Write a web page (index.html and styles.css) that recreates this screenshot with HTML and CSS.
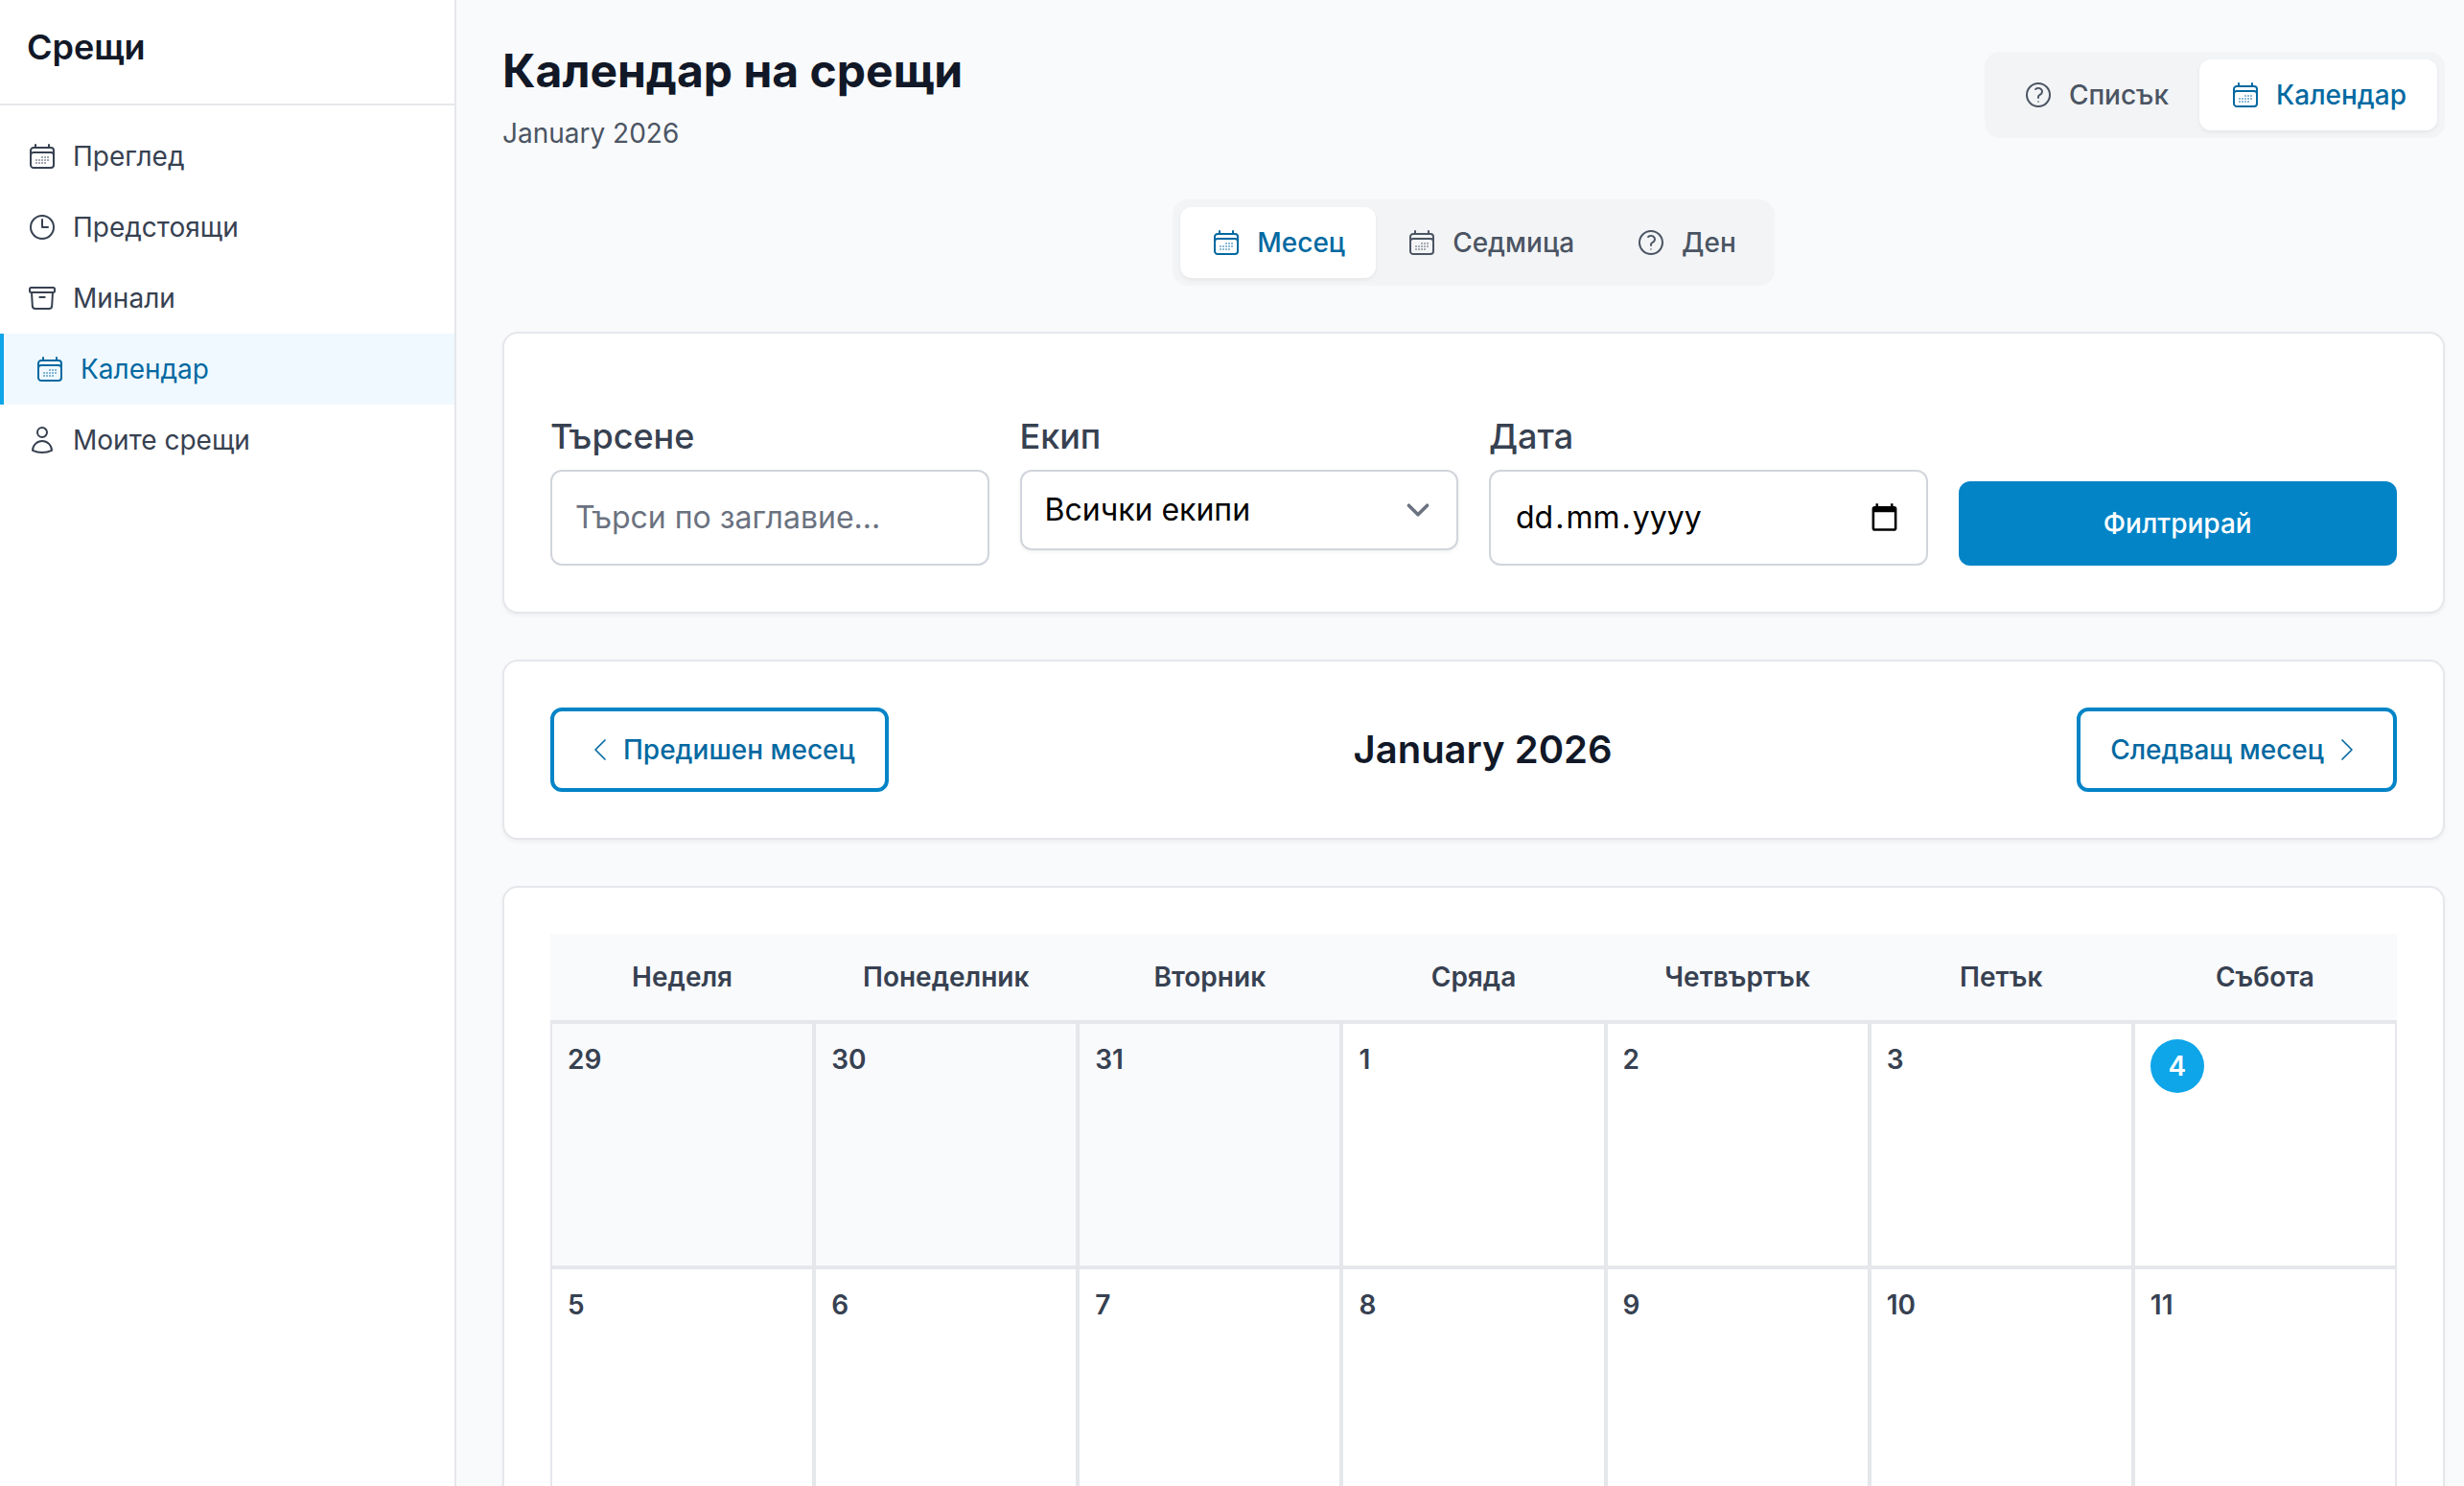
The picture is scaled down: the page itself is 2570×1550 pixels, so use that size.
FILE: index.html
```html
<!DOCTYPE html>
<html lang="bg">
<head>
<meta charset="utf-8">
<title>Календар на срещи</title>
<link rel="stylesheet" href="styles.css">
</head>
<body>
<svg class="sprite" aria-hidden="true">
  <symbol id="calendar" viewBox="0 0 24 24"><path d="M6.75 3v2.25M17.25 3v2.25M3 18.75V7.5a2.25 2.25 0 012.25-2.25h13.5A2.25 2.25 0 0121 7.5v11.25m-18 0A2.25 2.25 0 005.25 21h13.5A2.25 2.25 0 0021 18.75m-18 0v-7.5A2.25 2.25 0 015.25 9h13.5A2.25 2.25 0 0121 11.25v7.5"/><path opacity=".6" d="M12 12.75h.008v.008H12v-.008zM12 15h.008v.008H12V15zm0 2.25h.008v.008H12v-.008zM9.75 15h.008v.008H9.75V15zm0 2.25h.008v.008H9.75v-.008zM7.5 15h.008v.008H7.5V15zm0 2.25h.008v.008H7.5v-.008zm6.75-4.5h.008v.008h-.008v-.008zm0 2.25h.008v.008h-.008V15zm0 2.25h.008v.008h-.008v-.008zm2.25-4.5h.008v.008H16.5v-.008zm0 2.25h.008v.008H16.5V15z"/></symbol>
  <symbol id="clock" viewBox="0 0 24 24"><path d="M12 6v6h4.5m4.5 0a9 9 0 11-18 0 9 9 0 0118 0z"/></symbol>
  <symbol id="archive" viewBox="0 0 24 24"><path d="M20.25 7.5l-.625 10.632a2.25 2.25 0 01-2.247 2.118H6.622a2.25 2.25 0 01-2.247-2.118L3.75 7.5M10 11.25h4M3.375 7.5h17.25c.621 0 1.125-.504 1.125-1.125v-1.5c0-.621-.504-1.125-1.125-1.125H3.375c-.621 0-1.125.504-1.125 1.125v1.5c0 .621.504 1.125 1.125 1.125z"/></symbol>
  <symbol id="user" viewBox="0 0 24 24"><path d="M15.75 6a3.75 3.75 0 11-7.5 0 3.75 3.75 0 017.5 0zM4.501 20.118a7.5 7.5 0 0114.998 0A17.933 17.933 0 0112 21.75c-2.676 0-5.216-.584-7.499-1.632z"/></symbol>
  <symbol id="question" viewBox="0 0 24 24"><path d="M9.879 7.519c1.171-1.025 3.071-1.025 4.242 0 1.172 1.025 1.172 2.687 0 3.712-.203.179-.43.326-.67.442-.745.361-1.45.999-1.45 1.827v.75M21 12a9 9 0 11-18 0 9 9 0 0118 0z"/><path opacity=".6" d="M12 17.25h.008v.008H12v-.008z"/></symbol>
  <symbol id="left" viewBox="0 0 24 24"><path d="M15.75 19.5L8.25 12l7.5-7.5"/></symbol>
  <symbol id="right" viewBox="0 0 24 24"><path d="M8.25 4.5l7.5 7.5-7.5 7.5"/></symbol>
</svg>
<div class="app">
  <aside class="sidebar">
    <div class="sidebar-header"><h2 class="sidebar-title">Срещи</h2></div>
    <nav class="nav">
      <a class="nav-item"><svg class="icon"><use href="#calendar"/></svg><span>Преглед</span></a>
      <a class="nav-item"><svg class="icon"><use href="#clock"/></svg><span>Предстоящи</span></a>
      <a class="nav-item"><svg class="icon"><use href="#archive"/></svg><span>Минали</span></a>
      <a class="nav-item active"><svg class="icon"><use href="#calendar"/></svg><span>Календар</span></a>
      <a class="nav-item"><svg class="icon"><use href="#user"/></svg><span>Моите срещи</span></a>
    </nav>
  </aside>
  <main class="main">
    <header class="page-header">
      <div>
        <h1 class="page-title">Календар на срещи</h1>
        <p class="page-subtitle">January 2026</p>
      </div>
      <div class="tabs">
        <a class="tab"><svg class="icon"><use href="#question"/></svg><span>Списък</span></a>
        <a class="tab active"><svg class="icon"><use href="#calendar"/></svg><span>Календар</span></a>
      </div>
    </header>
    <div class="tabs view-tabs">
      <a class="tab active"><svg class="icon"><use href="#calendar"/></svg><span>Месец</span></a>
      <a class="tab"><svg class="icon"><use href="#calendar"/></svg><span>Седмица</span></a>
      <a class="tab"><svg class="icon"><use href="#question"/></svg><span>Ден</span></a>
    </div>
    <section class="card">
      <form class="filters">
        <div class="field">
          <label class="label">Търсене</label>
          <div class="control placeholder"><span>Търси по заглавие...</span></div>
        </div>
        <div class="field">
          <label class="label">Екип</label>
          <div class="control select"><span>Всички екипи</span><svg class="select-arrow" viewBox="0 0 20 20"><path d="M6 8l4 4 4-4"/></svg></div>
        </div>
        <div class="field">
          <label class="label">Дата</label>
          <div class="control date"><span><span class="part">dd</span>.<span class="part">mm</span>.<span class="part">yyyy</span></span><svg class="date-icon" viewBox="0 0 24 24"><path d="M20 3h-1V1h-2v2H7V1H5v2H4c-1.1 0-2 .9-2 2v16c0 1.1.9 2 2 2h16c1.1 0 2-.9 2-2V5c0-1.1-.9-2-2-2zm0 18H4V8h16v13z"/></svg></div>
        </div>
        <button class="submit" type="button">Филтрирай</button>
      </form>
    </section>
    <section class="card month-nav">
      <a class="outline-button prev"><svg class="icon"><use href="#left"/></svg><span>Предишен месец</span></a>
      <h2 class="month-title">January 2026</h2>
      <a class="outline-button next"><span>Следващ месец</span><svg class="icon"><use href="#right"/></svg></a>
    </section>
    <section class="card">
      <div class="calendar">
        <div class="weekday">Неделя</div>
        <div class="weekday">Понеделник</div>
        <div class="weekday">Вторник</div>
        <div class="weekday">Сряда</div>
        <div class="weekday">Четвъртък</div>
        <div class="weekday">Петък</div>
        <div class="weekday">Събота</div>
        <div class="day other">29</div>
        <div class="day other">30</div>
        <div class="day other">31</div>
        <div class="day">1</div>
        <div class="day">2</div>
        <div class="day">3</div>
        <div class="day"><span class="today">4</span></div>
        <div class="day">5</div>
        <div class="day">6</div>
        <div class="day">7</div>
        <div class="day">8</div>
        <div class="day">9</div>
        <div class="day">10</div>
        <div class="day">11</div>
      </div>
    </section>
  </main>
</div>
</body>
</html>
```
FILE: styles.css
```css
* { box-sizing: border-box; }

body {
  margin: 0;
  height: 1550px;
  overflow: hidden;
  background: #f9fafc;
  color: #374151;
  font-family: Inter, "Liberation Sans", sans-serif;
  font-size: 28px;
  line-height: 42px;
}

h1, h2, p { margin: 0; }

.sprite { display: none; }

.app { display: flex; height: 1550px; }

.icon {
  flex: none;
  width: 32px;
  height: 32px;
  fill: none;
  stroke: currentColor;
  stroke-width: 1.5;
  stroke-linecap: round;
  stroke-linejoin: round;
}

/* Sidebar */
.sidebar {
  flex: none;
  width: 476px;
  background: #fff;
  border-right: 2px solid #e5e7eb;
}

.sidebar-header {
  height: 110px;
  padding: 22px 28px;
  border-bottom: 2px solid #e5e7eb;
}

.sidebar-title {
  color: #111827;
  font-size: 36px;
  font-weight: 600;
  line-height: 54px;
}

.nav { padding-top: 16px; }

.nav-item {
  display: flex;
  align-items: center;
  gap: 16px;
  height: 74px;
  padding: 0 28px;
}

.nav-item.active {
  padding-left: 32px;
  border-left: 4px solid #0ea5e9;
  background: #f0f9ff;
  color: #0369a1;
}

/* Page */
.main {
  flex: 1;
  min-width: 0;
  display: flex;
  flex-direction: column;
  padding: 45px 20px 0 48px;
}

.page-header {
  flex: none;
  display: flex;
  justify-content: space-between;
  align-items: flex-start;
  height: 163px;
}

.page-title {
  color: #111827;
  font-size: 48px;
  font-weight: 700;
  line-height: 58px;
}

.page-subtitle {
  margin-top: 15px;
  color: #4b5563;
}

.tabs {
  flex: none;
  display: flex;
  padding: 8px;
  border-radius: 16px;
  background: #f3f4f6;
}

.page-header .tabs { margin-top: 9px; }

.view-tabs {
  align-self: center;
  margin-bottom: 48px;
}

.tab {
  display: flex;
  align-items: center;
  gap: 16px;
  height: 74px;
  padding: 0 32px;
  border-radius: 12px;
  color: #4b5563;
  font-weight: 500;
}

.tab.active {
  background: #fff;
  color: #0369a1;
  box-shadow: 0 2px 4px rgb(0 0 0 / 6%);
}

.card {
  flex: none;
  margin-bottom: 48px;
  padding: 48px;
  border: 2px solid #e5e7eb;
  border-radius: 16px;
  background: #fff;
  box-shadow: 0 2px 4px rgb(0 0 0 / 5%);
}

/* Filters */
.filters {
  display: grid;
  grid-template-columns: repeat(4, 1fr);
  gap: 32px;
  padding-top: 32px;
}

.label {
  display: block;
  margin-bottom: 8px;
  font-size: 36px;
  font-weight: 500;
  line-height: 54px;
}

.control {
  display: flex;
  align-items: center;
  justify-content: space-between;
  height: 100px;
  padding: 0 24px;
  border: 2px solid #d1d5db;
  border-radius: 12px;
  background: #fff;
  color: #000;
  font-size: 32px;
}

.placeholder { color: #6b7280; }

.select {
  height: 84px;
  padding-right: 16px;
  box-shadow: 0 2px 4px rgb(0 0 0 / 5%);
}

.select-arrow {
  width: 48px;
  height: 48px;
  fill: none;
  stroke: #6b7280;
  stroke-width: 1.5;
  stroke-linecap: round;
  stroke-linejoin: round;
}

.part { padding: 0 2px; }

.date-icon {
  width: 31px;
  height: 31px;
  margin: 0 4px 2px 0;
}

.submit {
  align-self: end;
  height: 88px;
  border: 0;
  border-radius: 12px;
  background: #0284c7;
  color: #fff;
  font: 500 28px/42px Inter, sans-serif;
}

/* Month navigation */
.month-nav {
  display: flex;
  justify-content: space-between;
  align-items: center;
}

.outline-button {
  display: flex;
  align-items: center;
  gap: 8px;
  height: 88px;
  padding: 0 32px;
  border: 4px solid #0284c7;
  border-radius: 12px;
  color: #0369a1;
  font-weight: 500;
}

.outline-button.prev { padding-right: 31px; }
.outline-button.next { padding-left: 31px; }
.outline-button .icon { stroke-width: 1.25; }

.month-title {
  color: #111827;
  font-size: 40px;
  font-weight: 600;
  line-height: 60px;
}

/* Calendar grid */
.calendar {
  display: grid;
  grid-template-columns: repeat(7, 1fr);
  grid-auto-rows: 256px;
  grid-template-rows: 92px;
  font-weight: 600;
}

.weekday {
  padding-top: 24px;
  border-bottom: 2px solid #e5e7eb;
  background: #f9fafc;
  text-align: center;
}

.day {
  padding: 16px;
  border: 2px solid #e5e7eb;
}

.day.other { background: #f9fafc; }

.today {
  display: flex;
  align-items: center;
  justify-content: center;
  width: 56px;
  height: 56px;
  border-radius: 50%;
  background: #0ea5e9;
  color: #fff;
}
```
